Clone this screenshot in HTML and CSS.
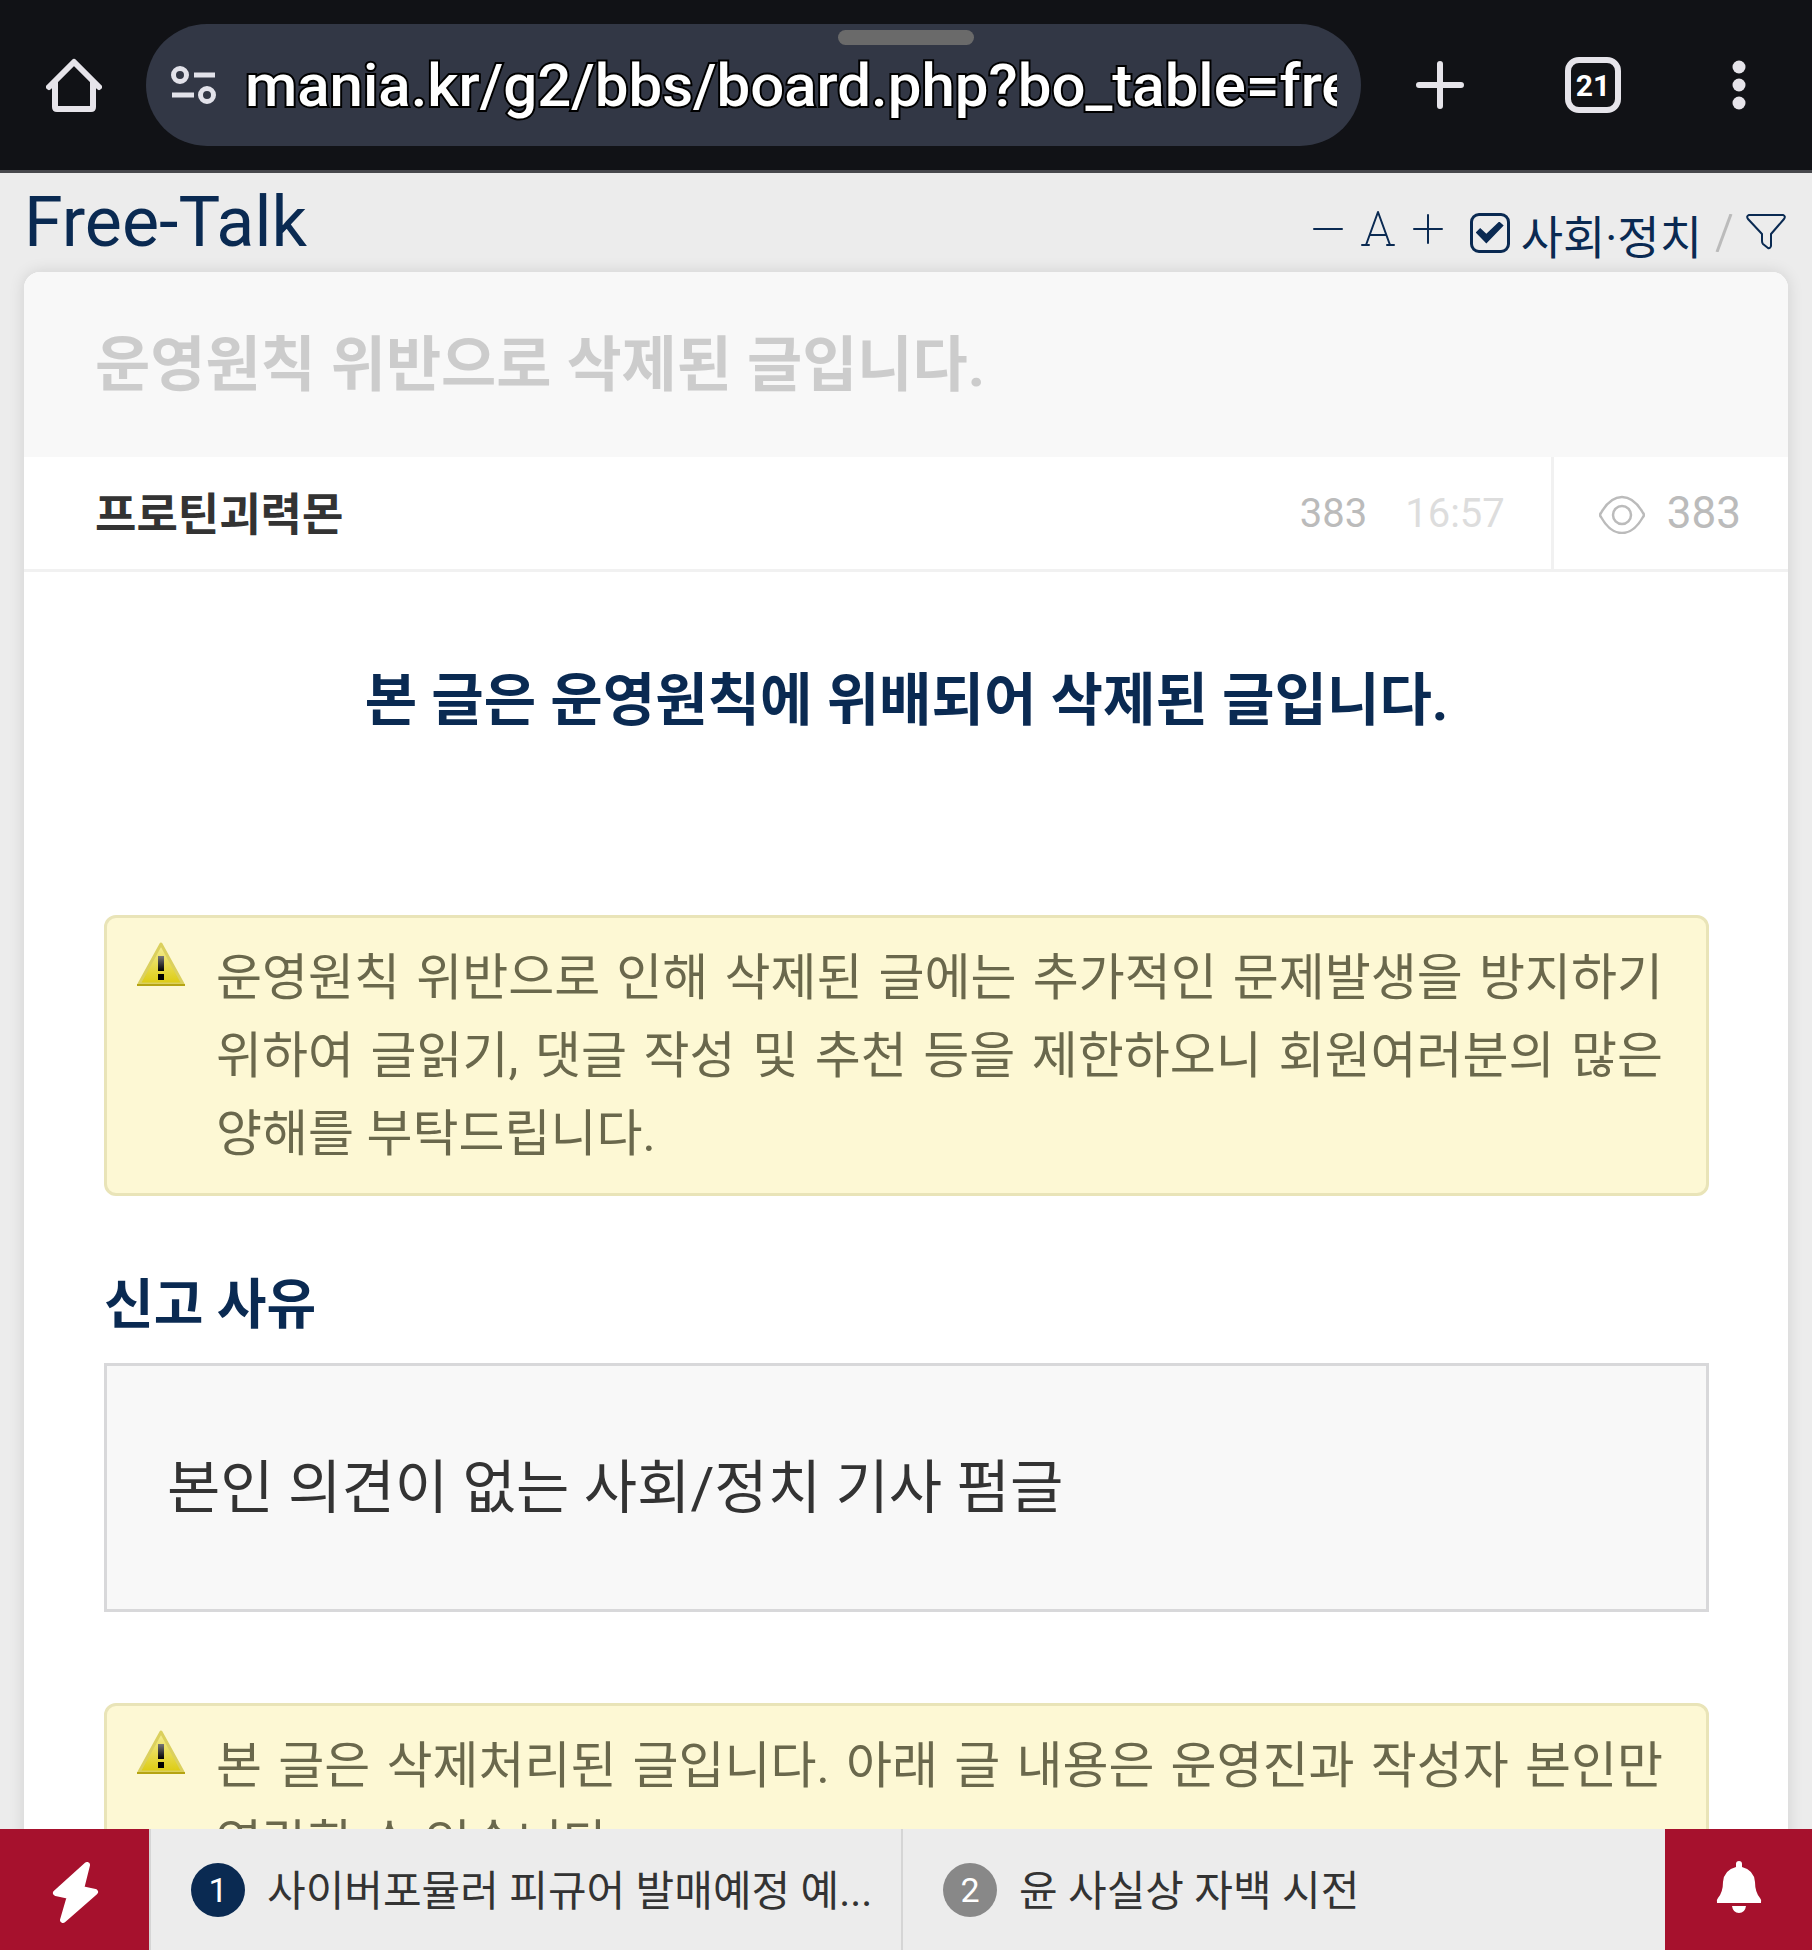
FILE: index.html
```html
<!DOCTYPE html>
<html lang="ko">
<head>
<meta charset="utf-8">
<meta name="viewport" content="width=device-width, initial-scale=1">
<title>Free-Talk</title>
<link rel="stylesheet" href="styles.css">
</head>
<body>
<div class="shell">
  <header class="browser">
    <button class="browser-btn home" aria-label="홈">
      <svg width="56" height="56" viewBox="0 0 56 56" fill="none" stroke="#e6e4ea" stroke-width="6"><path d="M3 30 28 5 53 30" stroke-linecap="round" stroke-linejoin="round"/><path d="M9 24V50Q9 52 11 52H45Q47 52 47 50V24"/></svg>
    </button>
    <div class="address">
      <span class="handle"></span>
      <svg class="site-icon" width="46" height="40" viewBox="0 0 46 40" fill="none" stroke="#e2e2ea" stroke-width="5"><circle cx="9" cy="10" r="6.500"/><path d="M23 10H44M1 30H23"/><circle cx="36" cy="30" r="6.500"/></svg>
      <input class="url" type="text" aria-label="주소" value="mania.kr/g2/bbs/board.php?bo_table=free">
    </div>
    <div class="browser-actions">
      <button class="browser-btn" aria-label="새 탭">
        <svg width="50" height="50" viewBox="0 0 50 50" stroke="#e6e4ea" stroke-width="6" stroke-linecap="round"><path d="M25 4V46M4 25H46"/></svg>
      </button>
      <button class="browser-btn tabs">21</button>
      <button class="browser-btn menu" aria-label="메뉴">
        <svg width="14" height="50" viewBox="0 0 14 50" fill="#e6e4ea"><circle cx="7" cy="7" r="6.500"/><circle cx="7" cy="25" r="6.500"/><circle cx="7" cy="43" r="6.500"/></svg>
      </button>
    </div>
  </header>

  <main class="page">
    <div class="board-head">
      <h1 class="board-title">Free-Talk</h1>
      <div class="tools">
        <div class="font-size">
          <button aria-label="글자 작게"><svg width="30" height="40" viewBox="0 0 30 40" stroke="currentColor" stroke-width="2" stroke-linecap="round"><path d="M1 20H29"/></svg></button>
          <button aria-label="글자 크기"><svg width="34" height="40" viewBox="0 0 34 40" fill="none" stroke="currentColor" stroke-width="2" stroke-linecap="round" stroke-linejoin="round"><path d="M5 36 17 3 29 36M9 26H25M1 36H8M26 36H33"/></svg></button>
          <button aria-label="글자 크게"><svg width="30" height="40" viewBox="0 0 30 40" stroke="currentColor" stroke-width="2" stroke-linecap="round"><path d="M1 20H29M15 6V34"/></svg></button>
        </div>
        <label class="filter"><input class="check" type="checkbox" checked><span class="filter-name">사회·정치</span></label>
        <svg class="slash" width="18" height="38" viewBox="0 0 18 38" stroke="#bbb" stroke-width="3"><path d="M16 0 2 38"/></svg>
        <button aria-label="필터"><svg width="40" height="40" viewBox="0 0 40 40" fill="none" stroke="currentColor" stroke-width="2" stroke-linejoin="round"><path d="M3 2H37Q40 3 38 6L25 21V33Q24 36 22 35L17 31Q16 30 16 28V21L2 6Q0 3 3 2Z"/></svg></button>
      </div>
    </div>

    <article class="card">
      <h2 class="post-title">운영원칙 위반으로 삭제된 글입니다.</h2>
      <div class="meta">
        <strong class="author">프로틴괴력몬</strong>
        <span class="hits">383</span>
        <time class="time">16:57</time>
        <div class="views">
          <svg width="46" height="42" viewBox="0 0 46 42" fill="none" stroke="#bbb" stroke-width="2.500"><path d="M2 21Q11 5 23 5T44 21Q46 23 44 25Q35 41 23 41T2 25Q0 23 2 21Z"/><circle cx="23" cy="23" r="9"/></svg>
          <span>383</span>
        </div>
      </div>
      <div class="content">
        <p class="message">본 글은 운영원칙에 위배되어 삭제된 글입니다.</p>
        <div class="alert">
          <svg class="warn" width="50" height="46" viewBox="0 0 50 46"><use href="#warn"/></svg>
          <p>운영원칙 위반으로 인해 삭제된 글에는 추가적인 문제발생을 방지하기 위하여 글읽기, 댓글 작성 및 추천 등을 제한하오니 회원여러분의 많은 양해를 부탁드립니다.</p>
        </div>
        <h3 class="reason-title">신고 사유</h3>
        <div class="reason">본인 의견이 없는 사회/정치 기사 펌글</div>
        <div class="alert">
          <svg class="warn" width="50" height="46" viewBox="0 0 50 46"><use href="#warn"/></svg>
          <p>본 글은 삭제처리된 글입니다. 아래 글 내용은 운영진과 작성자 본인만 열람할 수 있습니다.</p>
        </div>
      </div>
    </article>
  </main>

  <nav class="bottom">
    <button class="red quick" aria-label="빠른 메뉴">
      <svg width="48" height="64" viewBox="0 0 48 64" fill="#fff" stroke="#fff" stroke-width="6" stroke-linejoin="round"><path d="M36 5 5 33 19 36 12 60 44 32 30 29Z"/></svg>
    </button>
    <a class="item lead" href="#"><span class="num first">1</span><span class="item-text">사이버포뮬러 피규어 발매예정 예...</span></a>
    <a class="item" href="#"><span class="num">2</span><span class="item-text">윤 사실상 자백 시전</span></a>
    <button class="red" aria-label="알림">
      <svg width="46" height="58" viewBox="0 0 46 58" fill="#fff"><path d="M20 6V3Q20 0 23 0T26 3V6Q38 9 39 21Q39 31 44 37Q46 39 45 42H1Q0 39 2 37Q7 31 7 21Q8 9 20 6ZM16 45H30Q29 52 23 52T16 45Z"/></svg>
    </button>
  </nav>
</div>

<svg width="0" height="0" class="defs" aria-hidden="true">
  <defs>
    <linearGradient id="amber" x1="0" y1="0" x2="0" y2="1"><stop offset="0" stop-color="#f5ee9a"/><stop offset="1" stop-color="#dccb10"/></linearGradient>
    <linearGradient id="mark" x1="0" y1="0" x2="0" y2="1"><stop offset="0" stop-color="#777"/><stop offset="1" stop-color="#000"/></linearGradient>
    <symbol id="warn" viewBox="0 0 50 46">
      <path d="M25 2 47 42H3Z" fill="url(#amber)" stroke="#dbd05e" stroke-width="3" stroke-linejoin="round"/>
      <path d="M1 43H49" stroke="#b5a413" stroke-width="2"/>
      <path d="M22 14H28V29H22Z" fill="url(#mark)"/><path d="M22 32H28V38H22Z"/>
    </symbol>
  </defs>
</svg>
</body>
</html>
```

FILE: styles.css
```css
* { box-sizing: border-box; }
body, h1, h2, h3, p { margin: 0; }
body {
  font-family: Roboto, "Noto Sans CJK KR", sans-serif;
  background: #ececec;
  color: #333;
}
button { border: 0; padding: 0; background: none; font: inherit; color: inherit; display: flex; align-items: center; justify-content: center; }
svg { display: block; flex: none; }
.defs { position: absolute; }

.shell { height: 100vh; display: flex; flex-direction: column; overflow: hidden; }

/* browser toolbar */
.browser {
  flex: none;
  display: flex;
  align-items: center;
  height: 173px;
  padding: 24px 66px 24px 46px;
  background: #111216;
  border-bottom: 3px solid #47484c;
}
.home { margin-right: 44px; }
.address {
  position: relative;
  flex: 1;
  min-width: 0;
  height: 122px;
  display: flex;
  align-items: center;
  gap: 28px;
  padding: 0 24px 0 25px;
  background: #323745;
  border-radius: 61px;
}
.handle {
  position: absolute;
  top: 6px;
  left: 50%;
  width: 136px;
  height: 15px;
  margin-left: 84px;
  border-radius: 8px;
  background: #6a6a6a;
}
.url {
  flex: 1;
  min-width: 0;
  height: 90px;
  padding: 0;
  border: 0;
  outline: 0;
  background: none;
  color: #fff;
  font-family: Roboto, sans-serif;
  font-size: 60px;
  font-weight: 500;
  paint-order: stroke fill;
  -webkit-text-stroke: 4px #000;
}
.browser-actions { display: flex; align-items: center; gap: 100px; margin-left: 54px; }
.menu { margin-left: 11px; }
.tabs {
  width: 56px;
  height: 56px;
  border: 6px solid #e6e4ea;
  border-radius: 14px;
  color: #fff;
  font-size: 30px;
  font-weight: 700;
}

/* board header */
.page { flex: 1; min-height: 0; overflow: hidden; padding: 0 24px; }
.board-head { display: flex; justify-content: space-between; height: 99px; color: #0a2a52; }
.board-title { font-size: 70px; font-weight: 400; line-height: 99px; }
.tools { display: flex; align-items: center; gap: 13px; padding: 20px 2px 0 0; }
.font-size { display: flex; gap: 18px; margin-right: 14px; padding-bottom: 8px; }
.filter { display: flex; align-items: center; gap: 11px; font-size: 46px; line-height: 60px; }
.filter-name { padding-top: 10px; }
.check {
  appearance: none;
  width: 40px;
  height: 40px;
  margin: 0;
  border: 3px solid #0a2a52;
  border-radius: 9px;
  display: grid;
  place-items: center;
}
.check:checked::before {
  content: "";
  width: 28px;
  height: 22px;
  background: #0a2a52;
  clip-path: polygon(0 50%, 16% 30%, 38% 56%, 84% 0, 100% 18%, 38% 100%);
}

/* post card */
.card {
  min-height: 1700px;
  background: #fff;
  border-radius: 16px;
  box-shadow: 0 0 16px rgba(0, 0, 0, .12);
}
.post-title {
  padding: 2px 71px 0;
  border-radius: 16px 16px 0 0;
  background: #f8f8f8;
  color: #ccc;
  font-size: 60px;
  font-weight: 700;
  line-height: 183px;
}
.meta { display: flex; align-items: center; height: 115px; padding-left: 71px; border-bottom: 3px solid #f1f1f1; font-size: 40px; }
.author { flex: 1; padding-bottom: 4px; font-size: 45px; }
.hits { color: #bbb; }
.time { margin: 0 46px 0 38px; color: #ddd; }
.views {
  align-self: stretch;
  display: flex;
  align-items: center;
  gap: 22px;
  padding: 0 47px 0 45px;
  border-left: 3px solid #f1f1f1;
  color: #bbb;
  font-size: 44px;
}
.content { padding: 84px 79px 0 80px; }
.message { color: #0a2a52; font-size: 57px; font-weight: 700; line-height: 90px; text-align: center; margin-bottom: 169px; }
.alert {
  display: flex;
  gap: 30px;
  padding: 21px 43px 20px 29px;
  border: 3px solid #e9e4b8;
  border-radius: 12px;
  background: #fdf8d4;
  color: #6a684c;
  font-size: 50px;
  line-height: 78px;
  text-align: justify;
  word-break: keep-all;
}
.warn { margin-top: 3px; }
.reason-title { margin: 70px 0 17px; color: #0a2a52; font-size: 54px; font-weight: 700; line-height: 80px; }
.reason {
  margin-bottom: 91px;
  padding: 83px 60px 82px;
  border: 3px solid #d8d8da;
  background: #f8f8f8;
  font-size: 58px;
  line-height: 78px;
}

/* bottom ticker */
.bottom { flex: none; display: flex; height: 121px; background: #ececec; }
.red { flex: none; width: 147px; background: #a6112d; }
.quick { width: 149px; padding-top: 4px; }
.item {
  flex: 1;
  min-width: 0;
  display: flex;
  align-items: center;
  gap: 22px;
  padding: 0 16px 0 40px;
  border-left: 2px solid #d5d5d5;
  color: #333;
  font-size: 42px;
  text-decoration: none;
}
.lead { flex: 0 0 41.5%; }
.item-text { overflow: hidden; white-space: nowrap; text-overflow: ellipsis; padding-bottom: 4px; }
.num {
  flex: none;
  width: 54px;
  height: 54px;
  border-radius: 50%;
  background: #888;
  color: #fff;
  font-size: 34px;
  line-height: 54px;
  text-align: center;
}
.first { background: #0a2a52; }
```
